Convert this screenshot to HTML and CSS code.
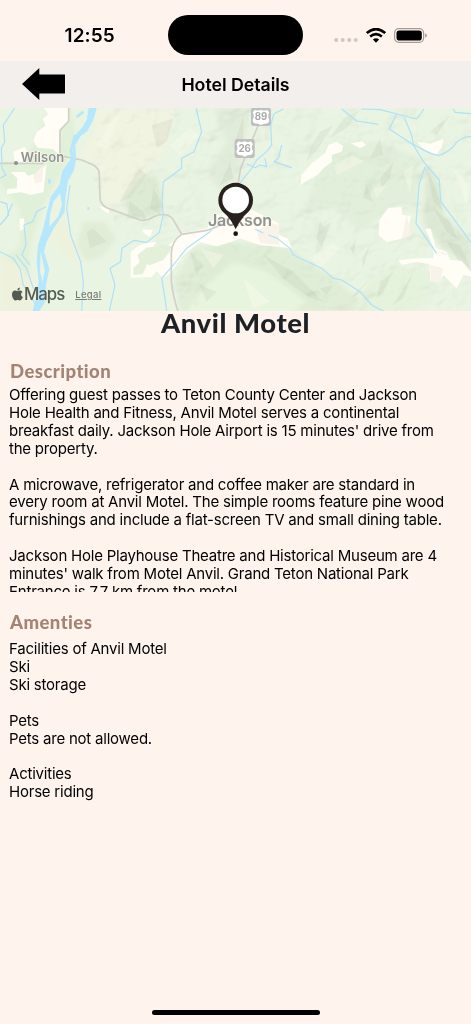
FILE: index.html
```html
<!DOCTYPE html>
<html lang="en">
<head>
    <meta charset="UTF-8">
    <meta name="viewport" content="width=device-width, initial-scale=1.0">
    <title>Hotel Details</title>
    <link rel="stylesheet" href="styles.css">
</head>
<body>
    <div class="screen">
        <div class="status-bar">
            <span class="time">12:55</span>
            <div class="island"></div>
            <div class="status-icons">
                <svg class="cell" width="24" height="4" viewBox="0 0 24 4">
                    <circle cx="2.2" cy="2" r="2"/><circle cx="8.7" cy="2" r="2"/><circle cx="15.2" cy="2" r="2"/><circle cx="21.7" cy="2" r="2"/>
                </svg>
                <svg class="wifi" width="20" height="15" viewBox="0 0 20 15">
                    <path d="M.8 5.1Q10-2.9 19.2 5.1" stroke-width="2.7"/>
                    <path d="M4.1 8.5Q10 3.6 15.9 8.5" stroke-width="2.6"/>
                    <path class="dot" d="M6.9 11.4Q10 8.9 13.1 11.4L10 14.7Z"/>
                </svg>
                <svg class="battery" width="33" height="15" viewBox="0 0 33 15">
                    <rect x=".6" y=".6" width="29" height="13.8" rx="4.3" fill="none" stroke="#a59c99" stroke-width="1.2"/>
                    <rect x="2.5" y="2.4" width="25.3" height="10.2" rx="2.8"/>
                    <path d="M31.1 5.2Q33 6 33 7.5T31.1 9.8Z" fill="#a59c99"/>
                </svg>
            </div>
        </div>

        <div class="nav-bar">
            <a class="back" href="#" aria-label="Back">
                <svg width="44" height="32" viewBox="0 0 44 32">
                    <path d="M0 16 17.3 0V6.6H43V25.4H17.3V32Z"/>
                </svg>
            </a>
            <h1>Hotel Details</h1>
        </div>

        <div class="map">
            <svg class="terrain" viewBox="0 9 1413 609" preserveAspectRatio="none">
                <defs>
                    <filter id="soft" x="-10%" y="-10%" width="120%" height="120%"><feGaussianBlur stdDeviation="7"/></filter>
                    <filter id="facet"><feGaussianBlur stdDeviation="1.5"/></filter>
                    <filter id="relief" x="0" y="0" width="100%" height="100%">
                        <feTurbulence type="fractalNoise" baseFrequency=".012 .015" numOctaves="3" seed="8"/>
                        <feDiffuseLighting surfaceScale="40" diffuseConstant="1.15" lighting-color="#fff"><feDistantLight azimuth="225" elevation="60"/></feDiffuseLighting>
                    </filter>
                    <clipPath id="hills">
                        <path d="M300 9H1413V618H980L880 540 690 430 640 380 600 618H520L510 500 380 430 320 300 270 200Z"/>
                    </clipPath>
                </defs>
                <path fill="#e9f4e2" d="M0 9H1413V618H0Z"/>

                <!-- valley and slope tints -->
                <g filter="url(#soft)">
                    <path fill="#e1f0d8" d="M210 9 230 100 180 210 130 300 90 420 80 618H0V470L60 420 60 310 0 240V180L80 160 150 9Z"/>
                    <path fill="#f1f4e0" d="M300 9H520L500 130 400 250 340 310 310 280 290 180 240 150 280 80Z"/>
                    <path fill="#eef2dd" d="M0 450 60 480 100 560 90 618H0Z"/>
                    <path fill="#eef2dd" d="M180 310 210 380 240 480 190 450 160 390Z"/>
                    <path fill="#dcead2" d="M420 220 470 210 490 280 480 330 440 340 390 330 370 290Z"/>
                    <path fill="#e1edd7" d="M250 350 310 350 350 400 310 450 260 470 230 420Z"/>
                    <path fill="#dfecd5" d="M580 430 690 410 860 430 1000 520 1120 618H540L525 520Z"/>
                    <path fill="#e8f5de" d="M700 470 800 500 920 590 880 618H560L620 540Z"/>
                    <path fill="#e0ecd8" d="M640 9H760L740 80 715 210 660 260 620 200 680 110Z"/>
                    <path fill="#e1efd8" d="M980 120 1130 110 1260 160 1250 300 1180 300 1080 380 1000 310 910 330Z"/>
                    <path fill="#dbe8d2" d="M1280 180 1320 240 1330 330 1413 410V480L1330 430 1270 350Z"/>
                    <path fill="#e2eed8" d="M940 340 980 360 960 420 980 450 950 440Z"/>
                    <path fill="#e4f2da" d="M1180 480 1290 500 1310 550 1250 618H1050L1110 530Z"/>
                </g>
                <g clip-path="url(#hills)"><path class="relief" d="M230 9H1413V618H230Z" filter="url(#relief)"/></g>

                <!-- facets of the ridges -->
                <g class="shade" filter="url(#facet)">
                    <path d="M420 190 380 250 360 290 390 280 440 210ZM455 60 520 40 500 110 470 130ZM460 250 490 300 480 330 450 310ZM390 290 430 320 440 345 380 340ZM260 380 280 370 320 410 270 430ZM570 440 610 480 590 510ZM600 540 650 560 620 590ZM1000 60 960 80 935 120 920 170 955 130ZM1080 15 1030 40 990 100 1040 70ZM1180 170 1170 220 1145 250 1140 220ZM1140 100 1110 160 1150 150ZM1100 240 1120 290 1090 280ZM960 350 950 400 965 430 975 400 995 350 970 365ZM1070 400 1060 450 1050 430ZM1110 420 1090 490 1085 460ZM1280 190 1310 260 1330 320 1300 290ZM1300 310 1350 350 1370 400 1340 380ZM1340 410 1380 420 1413 490V510L1370 460ZM790 450 880 500 970 590 930 580 850 520Z"/>
                    <path d="M1180 500 1150 560 1130 580 1140 530ZM1240 500 1210 580 1180 600ZM1110 520 1070 570 1050 580ZM1000 540 980 570 960 550ZM1350 30 1290 80 1310 90ZM730 30 700 130 730 100ZM690 170 660 240 700 220Z"/>
                </g>
                <g class="light" filter="url(#facet)">
                    <path d="M510 120 570 70 600 90 540 150ZM290 120 340 40 360 30 320 130ZM1000 180 1060 150 1090 170 1010 210ZM930 460 1000 415 1020 430 960 490ZM1120 250 1130 280 1160 240ZM600 430 670 450 640 490ZM1210 200 1240 180 1230 260ZM730 520 810 590 760 610ZM1360 190 1410 240 1400 300Z"/>
                </g>

                <!-- open ground -->
                <g fill="#fffdf5">
                    <path d="M132 9H205L208 48 178 78V150L158 132 112 128 100 108 110 82 136 62 128 42 144 28Z"/>
                    <path d="M40 140 74 126 84 146 64 174 44 172ZM32 202 74 200 84 212 116 204 140 176 130 262 92 270 64 262 20 268 22 252 50 250 52 220Z"/>
                    <path d="M58 342 72 340 74 370 60 378ZM296 304 326 310 328 326 312 318ZM428 374 458 374 450 396 430 384Z"/>
                    <path d="M392 440 420 420 440 414 470 410 456 430 476 440 520 410 540 386 620 370 650 330 680 320 735 305 836 355 838 390 862 400 875 430 835 425 780 420 720 400 695 410 650 424 600 412 550 450 512 505 488 520 470 498 455 516 392 518Z"/>
                    <path d="M902 240 904 210 935 175 975 145 985 120 1010 110 1030 122 1025 140 995 150 996 170 970 190 955 208 920 228ZM1052 115 1085 109 1099 120 1080 130Z"/>
                    <path d="M1250 110 1290 116 1330 102 1326 125 1308 150 1270 130ZM1138 345 1165 308 1205 307 1207 330 1233 332 1225 370 1234 390 1200 402 1160 412 1136 390Z"/>
                    <path d="M1276 372 1292 370 1308 430 1340 440 1350 465 1385 468 1413 500V515L1390 510 1370 550 1350 530 1330 510 1320 530 1292 530 1288 478 1250 470 1206 480 1195 466 1250 460 1300 460 1302 430Z"/>
                </g>
                <g fill="#f8f2e9">
                    <path d="M770 375 820 355 836 362 838 420 780 414ZM1220 330 1234 390 1205 402ZM1290 480 1330 490 1320 530 1294 530ZM1300 395 1318 438 1350 450 1325 448ZM100 212 130 180 126 230 105 236Z"/>
                </g>
                <path fill="#e5f0db" d="M400 490 420 470 440 480 428 508 400 510ZM412 450 440 428 500 420 520 425 490 465 450 480 420 475Z"/>

                <!-- roads -->
                <g class="road">
                    <path d="M0 175H130M206 9V48L180 76V152L245 165 280 180Q298 190 298 210L300 280Q302 298 320 308L420 345Q440 350 460 336 480 325 500 330 515 334 522 348L545 388 620 376Q660 368 680 340M545 388Q515 408 514 445V530Q520 580 534 618M775 60 722 190 710 260"/>
                </g>

                <!-- rivers and creeks -->
                <g class="river">
                    <path class="wide" d="M266 9H290L280 45 262 78 240 95 226 120 228 165 222 195 204 228 196 280 194 320 160 372 140 410 132 440 148 492 138 540 136 590 118 618H98L108 580 116 530 110 470 114 420 130 370 146 300 152 275 178 240 188 195 210 165 220 130 224 92 246 68 260 45ZM180 265 160 290 150 330 148 365 174 335 186 300ZM122 440 120 500 128 530 134 495Z"/>
                    <path class="braid" d="M250 20 230 36M225 90 212 140 220 170M146 222 150 236M262 310H268"/>
                    <path d="M44 9 22 42 10 60 14 110 4 130 6 190 18 210 0 220M0 290 20 296 26 330 0 360M38 295 22 330M138 305 110 320 98 350 72 360 78 420 66 450 90 480M0 440 40 460 60 490 70 540 108 600M48 450 80 490 100 550M210 240 200 310 212 390 242 470 250 530 245 618"/>
                    <path d="M588 9 605 80 582 140 545 160V190L490 230 486 290 490 328 478 382 440 412 402 406 366 430 362 470 330 490 345 540 328 618M665 332 630 380 560 430 520 480 485 520 495 580 500 618"/>
                    <path d="M850 12 822 26 812 60 815 120 800 140 770 165 755 190 715 240M845 120 835 160 822 170 875 188M740 176 765 188 780 180 800 185 795 160"/>
                    <path d="M765 372 790 384M805 390 832 400 870 430 880 450 965 490 1000 520 1025 525 1080 560 1115 600 1150 618"/>
                    <path d="M1025 12 1070 48 1135 58M1083 12 1140 14 1250 42 1272 12M1190 26 1168 72 1240 120 1270 170 1318 225 1322 290 1360 340 1413 412M1213 38 1235 90 1240 118Q1300 155 1320 150 1350 140 1370 112 1390 94 1413 95M1275 185 1257 240 1248 355 1310 445M1360 12 1365 22 1413 26"/>
                </g>

                <!-- route shields -->
                <g class="shield">
                    <rect x="753" y="8" width="60" height="55" rx="8"/>
                    <path d="M765 14Q773 19 783 14 793 19 801 14L808 22Q801 34 808 44 808 57 792 56L783 60 774 56Q758 57 758 44 765 34 758 22Z"/>
                    <text x="783" y="45">89</text>
                    <rect x="704" y="102" width="60" height="57" rx="8"/>
                    <path d="M716 109Q724 114 734 109 744 114 752 109L759 117Q752 129 759 139 759 152 743 151L734 155 725 151Q709 152 709 139 716 129 709 117Z"/>
                    <text x="734" y="141">26</text>
                </g>

                <circle cx="48" cy="174" r="6" fill="#8e8e8b"/>
                <text class="place" x="62" y="171" font-size="39" textLength="131">Wilson</text>
                <text class="place" x="624" y="363" font-size="48" textLength="192">Jackson</text>

                <!-- pin -->
                <path fill="#29211e" d="M707 373Q692 340 670 322A52 52 0 1 1 744 322Q722 340 707 373Z"/>
                <circle cx="707" cy="285" r="40" fill="#fff"/>
                <circle cx="707" cy="386" r="10" fill="#fff"/>
                <circle cx="707" cy="386" r="7" fill="#171412"/>
            </svg>
            <div class="map-credit">
                <svg width="11" height="14" viewBox="0 0 22 28">
                    <path d="M15.8.8C12.5 1.3 10.3 4 10.7 7 13.7 7 16 4 15.8.8ZM11 8.3C9.5 8.3 8 7.2 6 7.2 2.8 7.2 0 10.3 0 15.2 0 21 3.8 27 6.7 27 8.4 27 9.2 26 11.4 26S14.3 27 16 27C18.4 27 20.6 23.3 21.7 20.2 17 18.2 17.3 12.3 21 10.2 18.1 6.2 14.4 7 11 8.3Z"/>
                </svg>
                <span class="maps">Maps</span>
                <a class="legal" href="#">Legal</a>
            </div>
        </div>

        <h2 class="hotel-name">Anvil Motel</h2>

        <div class="content">
            <h3>Description</h3>
            <div class="text description">Offering guest passes to Teton County Center and Jackson
Hole Health and Fitness, Anvil Motel serves a continental
breakfast daily. Jackson Hole Airport is 15 minutes' drive from
the property.

A microwave, refrigerator and coffee maker are standard in
every room at Anvil Motel. The simple rooms feature pine wood
furnishings and include a flat-screen TV and small dining table.

Jackson Hole Playhouse Theatre and Historical Museum are 4
minutes' walk from Motel Anvil. Grand Teton National Park
Entrance is 7.7 km from the motel.</div>

            <h3>Amenties</h3>
            <div class="text amenities">Facilities of Anvil Motel
Ski
Ski storage

Pets
Pets are not allowed.

Activities
Horse riding</div>
        </div>

        <div class="home-indicator"></div>
    </div>
</body>
</html>
```

FILE: styles.css
```css
* {
    margin: 0;
    padding: 0;
    box-sizing: border-box;
}

body {
    font-family: Inter, 'Liberation Sans', sans-serif;
    background: #fff3ed;
    color: #000;
}

.screen {
    height: 1024px;
    display: flex;
    flex-direction: column;
    overflow: hidden;
}

/* Status bar */
.status-bar {
    height: 61px;
    flex-shrink: 0;
    display: grid;
    grid-template-columns: 168px 135px 1fr;
    align-items: center;
    padding-top: 9px;
}

.time {
    padding-left: 64.5px;
    font-size: 19px;
    font-weight: 600;
    letter-spacing: 0.1px;
}

.island {
    height: 40px;
    background: #000;
    border-radius: 20px;
}

.status-icons {
    display: flex;
    align-items: center;
    padding-left: 31px;
}

.cell {
    fill: #d2c7c2;
    margin-top: 10px;
}

.wifi {
    margin-left: 8px;
    fill: none;
    stroke: #000;
}

.wifi .dot {
    fill: #000;
    stroke: none;
}

.battery {
    margin-left: 8px;
}

/* Navigation */
.nav-bar {
    height: 47px;
    flex-shrink: 0;
    display: grid;
    grid-template-columns: 66px 1fr 66px;
    align-items: center;
    background: #f3efec;
}

.back {
    padding-left: 22px;
}

.back svg {
    display: block;
    margin-top: -1px;
}

.nav-bar h1 {
    text-align: center;
    font-size: 17.8px;
    font-weight: 600;
    letter-spacing: -0.05px;
}

/* Map */
.map {
    height: 203px;
    flex-shrink: 0;
    display: grid;
}

.terrain,
.map-credit {
    grid-area: 1 / 1;
}

.terrain {
    display: block;
    width: 100%;
    height: 203px;
}

.relief {
    mix-blend-mode: multiply;
    opacity: 0.06;
}

.shade {
    fill: #77806a;
    opacity: 0.08;
}

.light {
    fill: #fffdf0;
    opacity: 0.35;
}

.road path {
    fill: none;
    stroke: #d3d0c9;
    stroke-width: 5;
    stroke-linejoin: round;
}

.river path {
    fill: none;
    stroke: #aee1fa;
    stroke-width: 3.5;
    stroke-linejoin: round;
}

.river .wide {
    fill: #b7e7fc;
    fill-rule: evenodd;
    stroke: none;
}

.river .braid {
    stroke: #b7e7fc;
    stroke-width: 8;
}

.shield rect {
    fill: #bebfbe;
}

.shield path {
    fill: #fff;
}

.shield text {
    fill: #aaa;
    font-size: 29px;
    font-weight: 700;
    text-anchor: middle;
}

.place {
    fill: #92928f;
    font-weight: 600;
    stroke: #f7f8ef;
    stroke-width: 4;
    paint-order: stroke;
}

.map-credit {
    align-self: end;
    display: flex;
    align-items: center;
    height: 34px;
    padding-left: 12px;
    fill: #555b52;
    color: #555b52;
}

.maps {
    margin-left: 1px;
    font-size: 16.8px;
    font-weight: 500;
    letter-spacing: -1px;
}

.legal {
    margin: 1px 0 0 11px;
    color: #777d74;
    font-size: 9.5px;
    font-weight: 500;
    letter-spacing: 0.3px;
}

/* Hotel */
.hotel-name {
    height: 49px;
    line-height: 24px;
    text-align: center;
    color: #1d2126;
    font-family: Lato, sans-serif;
    font-size: 27.4px;
    font-weight: 900;
    letter-spacing: 0.6px;
}

.content {
    padding: 0 9px;
}

.content h3 {
    height: 26px;
    line-height: 22px;
    padding-left: 1px;
    color: #a38473;
    font-family: Lato, sans-serif;
    font-size: 18.5px;
    font-weight: 900;
    letter-spacing: 0.45px;
    font-variant-ligatures: none;
}

.text {
    white-space: pre;
    font-size: 15px;
    line-height: 17.9px;
    letter-spacing: -0.22px;
}

.description {
    height: 206px;
    overflow: hidden;
    margin-bottom: 19px;
}

.amenities {
    padding-top: 3px;
}

.home-indicator {
    width: 168px;
    height: 5px;
    margin: auto auto 9px;
    background: #000;
    border-radius: 3px;
}
```
